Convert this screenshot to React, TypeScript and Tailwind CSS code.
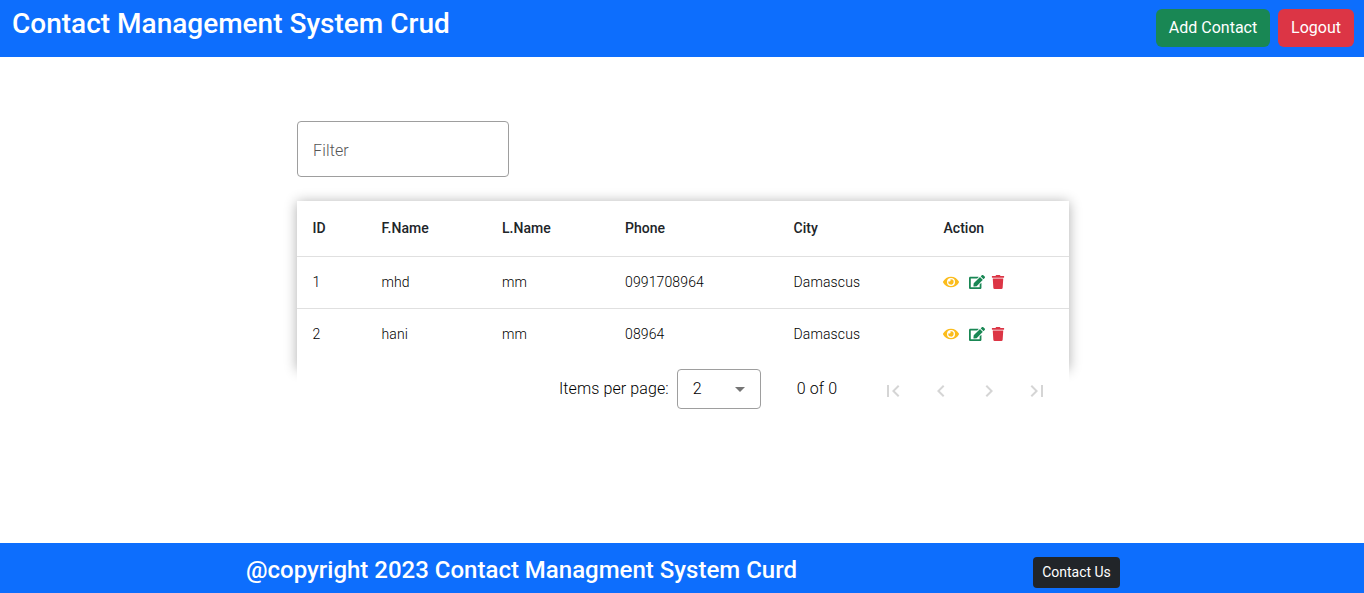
import React from "react";
import { FaEye, FaEdit, FaTrash } from "react-icons/fa";
import { MdFirstPage, MdChevronLeft, MdChevronRight, MdLastPage, MdArrowDropDown } from "react-icons/md";

const contacts = [
  { id: 1, first: "mhd", last: "mm", phone: "0991708964", city: "Damascus" },
  { id: 2, first: "hani", last: "mm", phone: "08964", city: "Damascus" },
];
const grid = "grid grid-cols-[69px_120.5px_123px_168.5px_150px_1fr] pl-[15.5px] pb-0.5 items-center leading-5";

export default function App() {
  return (
    <div className="flex h-[593px] flex-col overflow-hidden bg-white font-['Roboto',sans-serif] text-[#212529]">
      <header className="flex h-[57px] shrink-0 justify-between bg-[#0d6efd] pl-3 pr-2.5 text-white">
        <h1 className="pt-[7px] text-[28px] font-medium leading-[34px]">Contact Management System Crud</h1>
        <div className="flex gap-2 pt-[9px]">
          <button className="h-[38px] w-[114px] rounded-md bg-[#198754] text-base">Add Contact</button>
          <button className="h-[38px] w-[76px] rounded-md bg-[#dc3545] text-base">Logout</button>
        </div>
      </header>
      <main className="ml-[297px] w-[772px] flex-1 pt-16">
        <input placeholder="Filter" className="block h-14 w-[212px] rounded border border-[#9e9e9e] px-[15px] pt-0.5 text-base font-light tracking-[0.15px] placeholder:text-[#555]" />
        <section className="mt-6 h-[168px] shadow-[0_1px_12px_rgba(0,0,0,0.32)]">
          <div className={`${grid} h-14 border-b border-[#e0e0e0] text-sm font-medium tracking-[0.02px]`}>
            {["ID", "F.Name", "L.Name", "Phone", "City", "Action"].map((t) => <span key={t}>{t}</span>)}
          </div>
          {contacts.map((c) => (
            <div key={c.id} className={`${grid} h-[52px] border-b border-[#e0e0e0] text-sm font-light text-black tracking-[0.13px] last:border-transparent`}>
              <span>{c.id}</span><span>{c.first}</span><span>{c.last}</span><span>{c.phone}</span><span>{c.city}</span>
              <span className="-ml-px flex items-center">
                <FaEye className="text-[#fbbc1c]" size={16} />
                <FaEdit className="ml-2.5 text-[#198754]" size={16} />
                <FaTrash className="ml-1.5 text-[#dc3545]" size={14} />
              </span>
            </div>
          ))}
        </section>
        <div className="relative flex h-10 items-center bg-white pl-[262px] text-base font-light tracking-[0.1px] text-black">
          <span>Items per page:</span>
          <div className="ml-2 flex h-10 w-[84px] items-center justify-between rounded border border-[#9e9e9e] pl-[15px] pr-2">2<MdArrowDropDown size={24} className="text-[#757575]" /></div>
          <span className="ml-9">0 of 0</span>
          <div className="ml-[44px] flex gap-6 pt-1 text-[#d5d5d5]">
            <MdFirstPage size={24} /><MdChevronLeft size={24} /><MdChevronRight size={24} /><MdLastPage size={24} />
          </div>
        </div>
      </main>
      <footer className="flex h-[50px] shrink-0 bg-[#0d6efd] text-white">
        <h2 className="ml-[246px] w-[787px] pt-[10px] text-2xl font-medium leading-[34px]">@copyright 2023 Contact Managment System Curd</h2>
        <button className="mt-[14px] h-[31px] w-[87px] rounded bg-[#212529] pb-px text-sm">Contact Us</button>
      </footer>
    </div>
  );
}
